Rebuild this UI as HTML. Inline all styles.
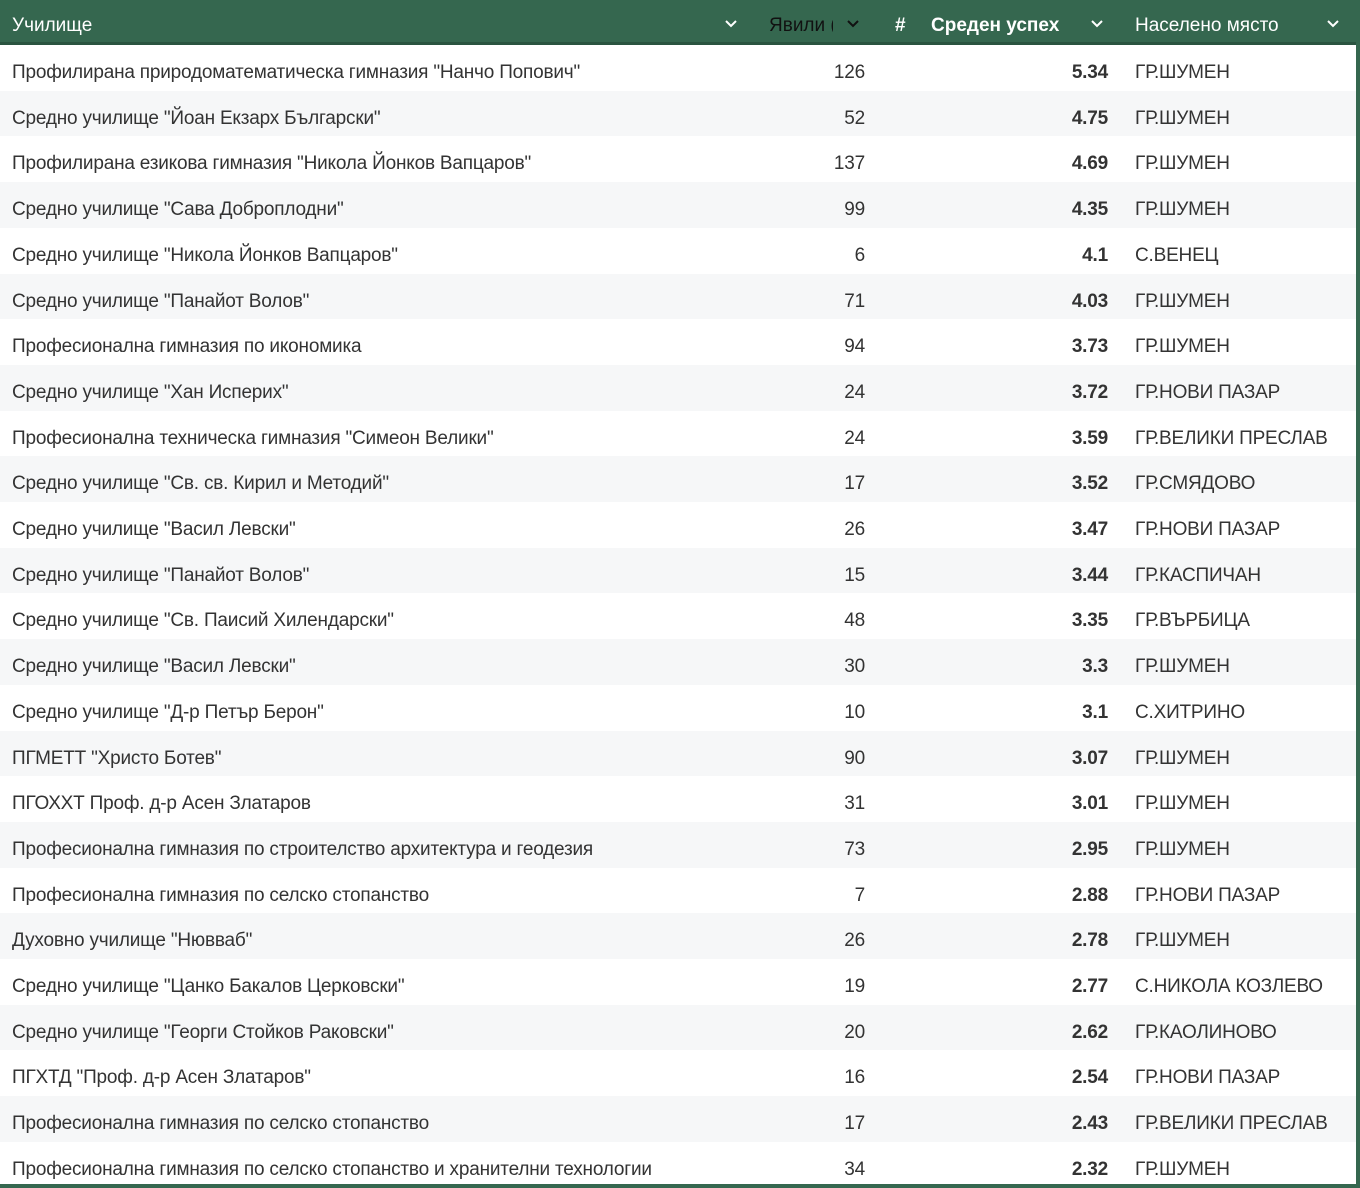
<!DOCTYPE html>
<html><head><meta charset="utf-8"><style>
body{margin:0;width:1360px;height:1188px;background:#fff;font-family:"Liberation Sans",sans-serif;color:#333;overflow:hidden;position:relative}
.hd{position:absolute;left:0;top:0;width:1360px;height:42px;background:#35674f;border-bottom:3px solid #2a5440;color:#fff;font-size:19px}
.hd span{position:absolute;top:15px;white-space:nowrap}
.ch{position:absolute;top:19px;width:14px;height:10px}
.row{position:absolute;left:0;width:1356px;height:45.7px;font-size:19px}
.row span{position:absolute;top:17px;white-space:nowrap;letter-spacing:-0.2px}
.n{left:12px}.a{right:491px;text-align:right}.s{right:248px;font-weight:bold}.c{left:1135px}
.bot{position:absolute;left:0;top:1184px;width:1360px;height:4px;background:#35674f}
.rb{position:absolute;left:1356px;top:0;width:4px;height:1188px;background:#35674f}
</style></head><body>
<div class="hd">
<span style="left:12px">Училище</span>
<svg class="ch" style="left:724px" viewBox="0 0 14 10"><path d="M2 2l5 5 5-5" stroke="#fff" stroke-width="2" fill="none"/></svg>
<span style="left:769px;color:#111;width:64px;overflow:hidden">Явили (</span>
<svg class="ch" style="left:846px" viewBox="0 0 14 10"><path d="M2 2l5 5 5-5" stroke="#111" stroke-width="2" fill="none"/></svg>
<span style="left:895px;font-weight:bold">#</span>
<span style="left:931px;font-weight:bold">Среден успех</span>
<svg class="ch" style="left:1090px" viewBox="0 0 14 10"><path d="M2 2l5 5 5-5" stroke="#fff" stroke-width="2" fill="none"/></svg>
<span style="left:1135px">Населено място</span>
<svg class="ch" style="left:1326px" viewBox="0 0 14 10"><path d="M2 2l5 5 5-5" stroke="#fff" stroke-width="2" fill="none"/></svg>
</div>
<div id="t"></div>
<div class="bot"></div><div class="rb"></div>
<script>
var d=[["Профилирана природоматематическа гимназия \"Нанчо Попович\"",126,"5.34","ГР.ШУМЕН"],
["Средно училище \"Йоан Екзарх Български\"",52,"4.75","ГР.ШУМЕН"],
["Профилирана езикова гимназия \"Никола Йонков Вапцаров\"",137,"4.69","ГР.ШУМЕН"],
["Средно училище \"Сава Доброплодни\"",99,"4.35","ГР.ШУМЕН"],
["Средно училище \"Никола Йонков Вапцаров\"",6,"4.1","С.ВЕНЕЦ"],
["Средно училище \"Панайот Волов\"",71,"4.03","ГР.ШУМЕН"],
["Професионална гимназия по икономика",94,"3.73","ГР.ШУМЕН"],
["Средно училище \"Хан Исперих\"",24,"3.72","ГР.НОВИ ПАЗАР"],
["Професионална техническа гимназия \"Симеон Велики\"",24,"3.59","ГР.ВЕЛИКИ ПРЕСЛАВ"],
["Средно училище \"Св. св. Кирил и Методий\"",17,"3.52","ГР.СМЯДОВО"],
["Средно училище \"Васил Левски\"",26,"3.47","ГР.НОВИ ПАЗАР"],
["Средно училище \"Панайот Волов\"",15,"3.44","ГР.КАСПИЧАН"],
["Средно училище \"Св. Паисий Хилендарски\"",48,"3.35","ГР.ВЪРБИЦА"],
["Средно училище \"Васил Левски\"",30,"3.3","ГР.ШУМЕН"],
["Средно училище \"Д-р Петър Берон\"",10,"3.1","С.ХИТРИНО"],
["ПГМЕТТ \"Христо Ботев\"",90,"3.07","ГР.ШУМЕН"],
["ПГОХХТ Проф. д-р Асен Златаров",31,"3.01","ГР.ШУМЕН"],
["Професионална гимназия по строителство архитектура и геодезия",73,"2.95","ГР.ШУМЕН"],
["Професионална гимназия по селско стопанство",7,"2.88","ГР.НОВИ ПАЗАР"],
["Духовно училище \"Нюvваб\"".replace("v","в"),26,"2.78","ГР.ШУМЕН"],
["Средно училище \"Цанко Бакалов Церковски\"",19,"2.77","С.НИКОЛА КОЗЛЕВО"],
["Средно училище \"Георги Стойков Раковски\"",20,"2.62","ГР.КАОЛИНОВО"],
["ПГХТД \"Проф. д-р Асен Златаров\"",16,"2.54","ГР.НОВИ ПАЗАР"],
["Професионална гимназия по селско стопанство",17,"2.43","ГР.ВЕЛИКИ ПРЕСЛАВ"],
["Професионална гимназия по селско стопанство и хранителни технологии",34,"2.32","ГР.ШУМЕН"]];
var h="";function e(s){return String(s).replace(/&/g,"&amp;").replace(/</g,"&lt;")}
d.forEach(function(r,i){h+='<div class="row" style="top:'+(45+i*45.7)+'px;background:'+(i%2?'#f6f7f8':'#fff')+'"><span class="n">'+e(r[0])+'</span><span class="a">'+r[1]+'</span><span class="s">'+r[2]+'</span><span class="c">'+e(r[3])+'</span></div>'});
document.getElementById("t").innerHTML=h;
</script>
</body></html>
